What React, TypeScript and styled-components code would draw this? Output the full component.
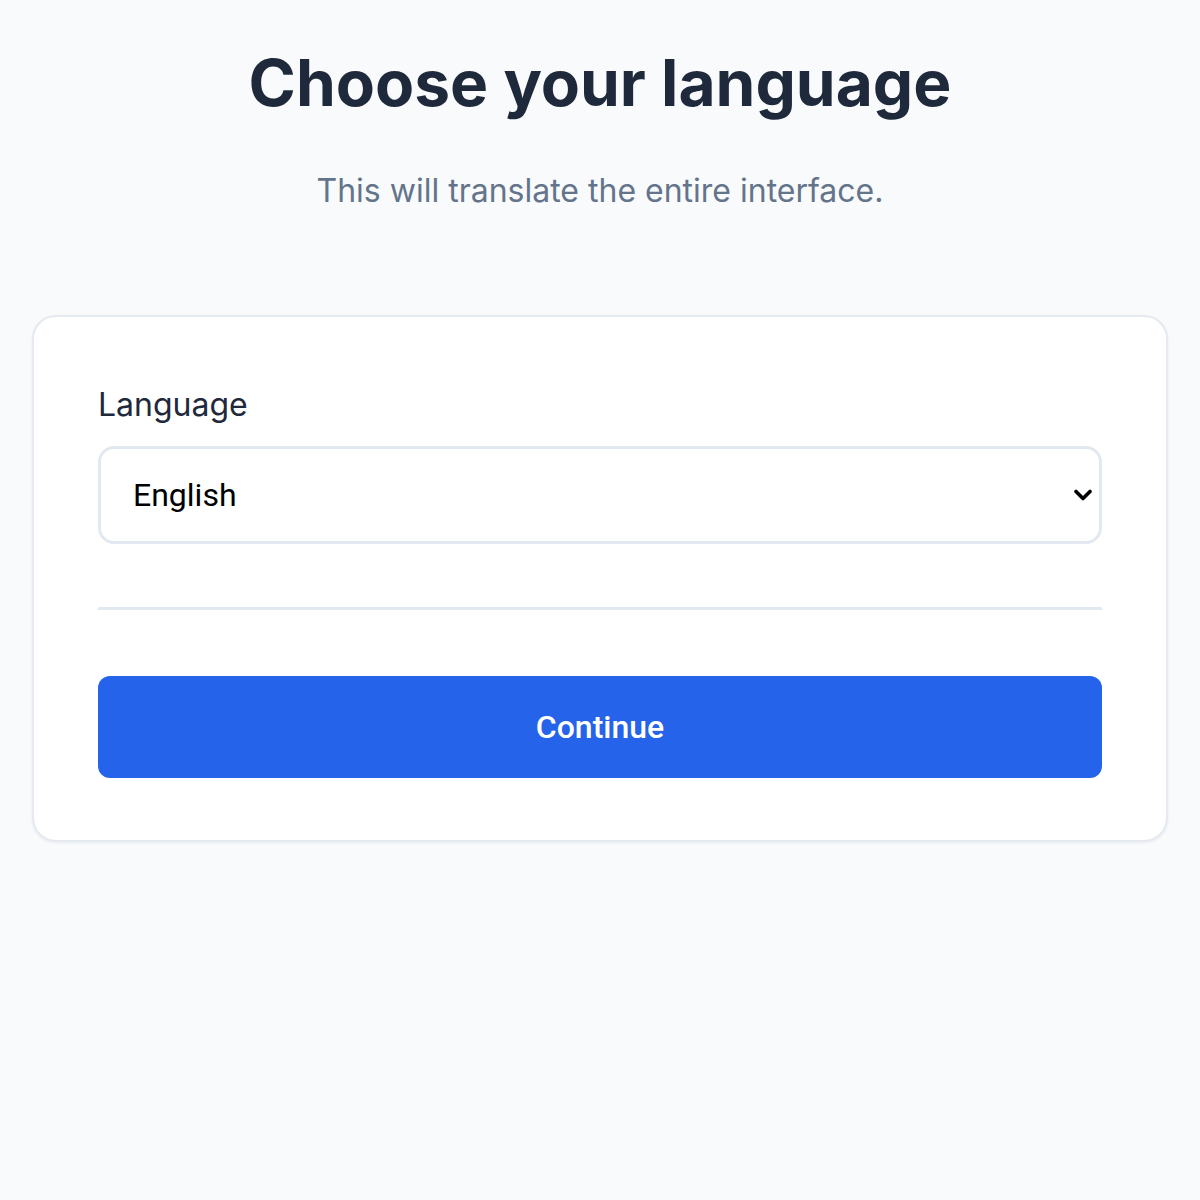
import { useState } from 'react';
import styled, { createGlobalStyle } from 'styled-components';

const GlobalStyle = createGlobalStyle`
  html, body {
    margin: 0;
    padding: 0;
    background: #f8fafc;
    font-family: Inter, "Noto Sans", sans-serif;
  }
`;

const languages = ['English', 'Español', 'Français', 'Deutsch', 'Italiano', 'Português'];

const App: React.FC = () => {
  const [language, setLanguage] = useState('English');

  return (
    <>
      <GlobalStyle />
      <Page>
        <Title>Choose your language</Title>
        <Subtitle>This will translate the entire interface.</Subtitle>
        <Card>
          <Label htmlFor="language">Language</Label>
          <SelectWrapper>
            <Select id="language" value={language} onChange={(e) => setLanguage(e.target.value)}>
              {languages.map((l) => (
                <option key={l} value={l}>{l}</option>
              ))}
            </Select>
            <Chevron viewBox="0 0 20 12" fill="none" stroke="#000" strokeWidth="3.6" strokeLinecap="round" strokeLinejoin="round">
              <path d="M3 2.5l7 7 7-7" />
            </Chevron>
          </SelectWrapper>
          <Divider />
          <Button type="button">Continue</Button>
        </Card>
      </Page>
    </>
  );
};

export default App;

const Page = styled.div`
  box-sizing: border-box;
  min-height: 1200px;
  padding: 40px 32px;
  display: flex;
  flex-direction: column;
  align-items: center;
`;

const Title = styled.h1`
  margin: 0;
  font-size: 64px;
  line-height: 86px;
  font-weight: 700;
  color: #1e293b;
`;

const Subtitle = styled.p`
  margin: 45px 0 0;
  font-size: 32px;
  line-height: 40px;
  color: #64748b;
`;

const Card = styled.div`
  box-sizing: border-box;
  width: 100%;
  margin-top: 104px;
  padding: 64px 64px 62px;
  background: #fff;
  border: 2px solid #e5e9f0;
  border-radius: 24px;
  box-shadow: 0 1px 3px rgba(15, 23, 42, 0.06);
  display: flex;
  flex-direction: column;
`;

const Label = styled.label`
  font-size: 32px;
  line-height: 48px;
  color: #1e293b;
  margin-bottom: 17px;
`;

const SelectWrapper = styled.div`
  position: relative;
`;

const Select = styled.select`
  box-sizing: border-box;
  width: 100%;
  height: 98px;
  padding: 0 60px 0 32px;
  appearance: none;
  background: #fff;
  border: 3px solid #e2e8f0;
  border-radius: 16px;
  font-family: Roboto, "Liberation Sans", sans-serif;
  font-size: 32px;
  color: #000;
  outline: none;
`;

const Chevron = styled.svg`
  position: absolute;
  right: 9px;
  top: 50%;
  width: 20px;
  height: 12px;
  transform: translateY(-50%);
  pointer-events: none;
`;

const Divider = styled.hr`
  margin: 63px 0 0;
  border: none;
  height: 3px;
  background: #e2e8f0;
`;

const Button = styled.button`
  margin-top: 66px;
  height: 102px;
  border: none;
  border-radius: 12px;
  background: #2563eb;
  color: #fff;
  font-family: Roboto, "Liberation Sans", sans-serif;
  font-size: 32px;
  font-weight: 500;
  cursor: pointer;
`;
